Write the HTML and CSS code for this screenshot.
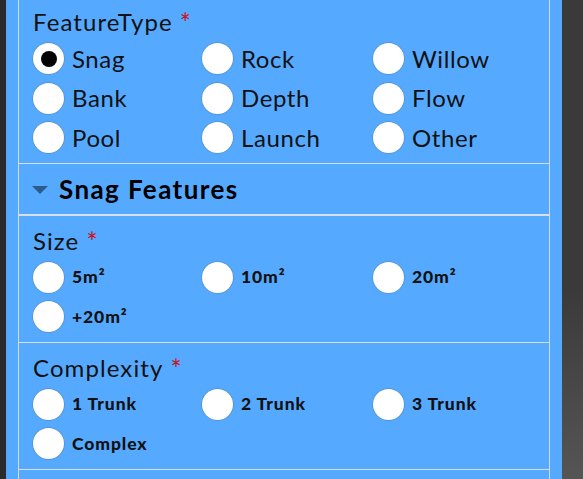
FILE: index.html
```html
<!DOCTYPE html>
<html lang="en">
<head>
<meta charset="utf-8">
<title>Snag Features</title>
<link rel="stylesheet" href="styles.css">
</head>
<body>
<div class="page">
  <div class="frame">
    <section class="field">
      <div class="field-title">FeatureType<span class="req">*</span></div>
      <div class="options">
        <label class="option"><span class="radio checked"></span><span class="opt-text">Snag</span></label>
        <label class="option"><span class="radio"></span><span class="opt-text">Rock</span></label>
        <label class="option"><span class="radio"></span><span class="opt-text">Willow</span></label>
        <label class="option"><span class="radio"></span><span class="opt-text">Bank</span></label>
        <label class="option"><span class="radio"></span><span class="opt-text">Depth</span></label>
        <label class="option"><span class="radio"></span><span class="opt-text">Flow</span></label>
        <label class="option"><span class="radio"></span><span class="opt-text">Pool</span></label>
        <label class="option"><span class="radio"></span><span class="opt-text">Launch</span></label>
        <label class="option"><span class="radio"></span><span class="opt-text">Other</span></label>
      </div>
    </section>
    <div class="group-head">
      <span class="caret"></span>
      <span class="group-title">Snag Features</span>
    </div>
    <section class="field">
      <div class="field-title">Size<span class="req">*</span></div>
      <div class="options">
        <label class="option"><span class="radio"></span><span class="opt-text bold">5m²</span></label>
        <label class="option"><span class="radio"></span><span class="opt-text bold">10m²</span></label>
        <label class="option"><span class="radio"></span><span class="opt-text bold">20m²</span></label>
        <label class="option"><span class="radio"></span><span class="opt-text bold">+20m²</span></label>
      </div>
    </section>
    <section class="field">
      <div class="field-title">Complexity<span class="req">*</span></div>
      <div class="options">
        <label class="option"><span class="radio"></span><span class="opt-text bold">1 Trunk</span></label>
        <label class="option"><span class="radio"></span><span class="opt-text bold">2 Trunk</span></label>
        <label class="option"><span class="radio"></span><span class="opt-text bold">3 Trunk</span></label>
        <label class="option"><span class="radio"></span><span class="opt-text bold">Complex</span></label>
      </div>
    </section>
  </div>
</div>
</body>
</html>
```
FILE: styles.css
```css
html, body {
  margin: 0;
  padding: 0;
  height: 100%;
}
body {
  background: linear-gradient(to bottom, #3a3a3a 0%, #3a3a3a 60%, #555555 100%);
  overflow: hidden;
  font-family: Lato, "Noto Sans", sans-serif;
  color: #111111;
}
.page {
  margin-left: 6px;
  width: 532px;
  min-height: 100%;
  background: #55aaff;
  padding: 0 12px;
  box-shadow: -6px 0 0 #2b2b2b;
}
.frame {
  margin-top: -3px;
  min-height: 490px;
  border-left: 1px solid #d3dbe3;
  border-right: 1px solid #d3dbe3;
}
.field {
  padding: 10px 14px 5px;
  border-bottom: 1px solid #d6dee6;
}
.field-title {
  font-size: 24px;
  line-height: 30px;
  height: 30px;
  letter-spacing: 1.1px;
  margin-bottom: 2px;
}
.req {
  color: #cc1020;
  margin-left: 7px;
  font-size: 26px;
  line-height: 0;
  vertical-align: -2px;
}
.options {
  display: grid;
  grid-template-columns: 169px 171px 170px;
  grid-auto-rows: 39.5px;
}
.option {
  display: flex;
  align-items: center;
  gap: 8px;
}
.radio {
  width: 31px;
  height: 31px;
  border-radius: 50%;
  background: #ffffff;
  box-shadow: 0 0 1px 0.5px rgba(60, 60, 60, 0.35);
  display: flex;
  align-items: center;
  justify-content: center;
  flex: none;
}
.radio.checked::after {
  content: "";
  width: 16px;
  height: 16px;
  border-radius: 50%;
  background: #000000;
}
.opt-text {
  font-size: 24px;
  line-height: 30px;
  letter-spacing: 0.6px;
}
.opt-text.bold {
  font-size: 17.5px;
  font-weight: 900;
  letter-spacing: 0.9px;
}
.group-head {
  height: 50px;
  display: flex;
  align-items: center;
  padding-left: 13px;
  gap: 11px;
  border-bottom: 2px solid #d6dee6;
}
.caret {
  width: 0;
  height: 0;
  border-left: 8px solid transparent;
  border-right: 8px solid transparent;
  border-top: 8px solid #2c5b8e;
  margin-top: 2px;
}
.group-title {
  font-size: 26px;
  font-weight: 700;
  line-height: 30px;
  letter-spacing: 1.4px;
  color: #000000;
}
```
